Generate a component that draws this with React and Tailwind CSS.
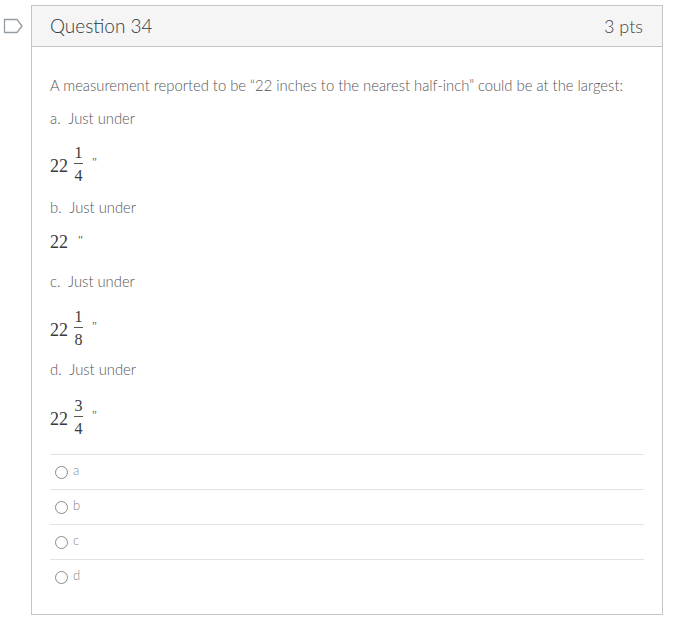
import React from "react";

function Frac({ num, den }) {
  return (
    <div className="flex items-center h-[38px] text-[#3a3a3a] text-[18px] font-['Liberation_Serif',serif]">
      <span className="leading-none mt-[3px]">22</span>
      <span className="inline-flex flex-col items-center ml-[6px] leading-none">
        <span className="text-[16px] leading-[15px]">{num}</span>
        <span className="block w-[9px] h-[1px] bg-[#555] mt-[3px] mb-[4px]"></span>
        <span className="text-[16px] leading-[15px]">{den}</span>
      </span>
      <span className="ml-[9px] text-[12px] text-[#666] -mt-[4px]">"</span>
    </div>
  );
}

function Radio({ label }) {
  return (
    <div className="h-[35px] border-t border-[#e3e3e3] flex items-center pl-[5px] gap-[5px] text-[#888]">
      <span className="w-[13px] h-[13px] rounded-full border-[1.5px] border-[#8a8a8a] inline-block"></span>
      <span className="text-[13px] font-light leading-none -mt-[3px]">{label}</span>
    </div>
  );
}

export default function App() {
  return (
    <div className="w-[700px] h-[626px] bg-white relative font-['Lato','Open_Sans',sans-serif]">
      <svg className="absolute left-[3px] top-[18px]" width="21" height="16" viewBox="0 0 21 16">
        <path d="M1.5 1.5 H14 L19 8 L14 14.5 H1.5 Z" fill="none" stroke="#939ba3" strokeWidth="1.3" strokeLinejoin="round" />
      </svg>
      <div className="absolute left-[31px] top-[5px] w-[632px] h-[610px] border border-[#c4c4c4] flex flex-col">
        <div className="h-[41px] bg-[#f5f5f5] border-b border-[#c4c4c4] flex items-center justify-between pl-[18px] pr-[19px] text-[#2d3b45] font-light">
          <span className="text-[19px]">Question 34</span>
          <span className="text-[18px] text-[#444]">3 pts</span>
        </div>
        <div className="px-[18px] pt-[27px] text-[14.8px] text-[#555] font-light">
          <p className="leading-[22px]">A measurement reported to be “22 inches to the nearest half-inch” could be at the largest:</p>
          <p className="leading-[22px] mt-[11px]">a.&nbsp; Just under</p>
          <div className="mt-[16px]"><Frac num="1" den="4" /></div>
          <p className="leading-[22px] mt-[13px]">b.&nbsp; Just under</p>
          <div className="mt-[13px] h-[22px] flex items-center text-[18px] text-[#3a3a3a] font-normal font-['Liberation_Serif',serif]">
            <span>22</span>
            <span className="ml-[10px] text-[12px] text-[#666] -mt-[4px]">"</span>
          </div>
          <p className="leading-[22px] mt-[17px]">c.&nbsp; Just under</p>
          <div className="mt-[17px]"><Frac num="1" den="8" /></div>
          <p className="leading-[22px] mt-[11px]">d.&nbsp; Just under</p>
          <div className="mt-[18px]"><Frac num="3" den="4" /></div>
          <div className="mt-[18px]">
            <Radio label="a" />
            <Radio label="b" />
            <Radio label="c" />
            <Radio label="d" />
          </div>
        </div>
      </div>
    </div>
  );
}
